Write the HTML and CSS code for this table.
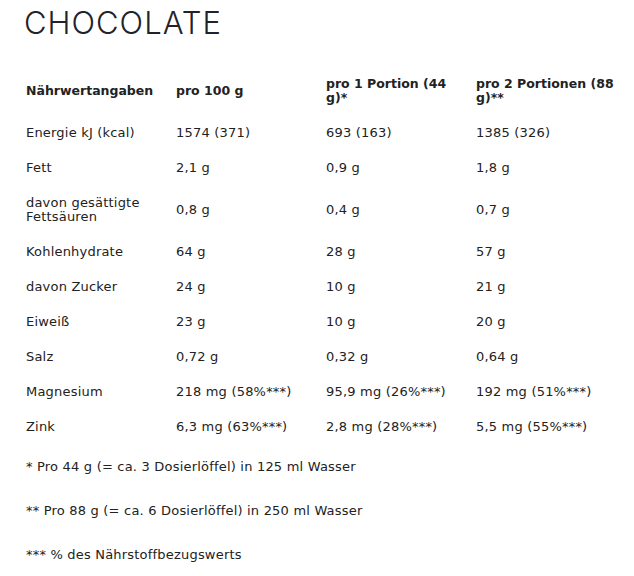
FILE: index.html
```html
<!DOCTYPE html>
<html lang="de">
<head>
<meta charset="utf-8">
<title>Chocolate</title>
<link rel="stylesheet" href="styles.css">
</head>
<body>
<main class="page">
  <h1 class="title">CHOCOLATE</h1>
  <div class="table">
    <div class="row head">
      <div class="cell">Nährwertangaben</div>
      <div class="cell">pro 100 g</div>
      <div class="cell">pro 1 Portion (44 g)*</div>
      <div class="cell">pro 2 Portionen (88 g)**</div>
    </div>
    <div class="row">
      <div class="cell">Energie kJ (kcal)</div>
      <div class="cell">1574 (371)</div>
      <div class="cell">693 (163)</div>
      <div class="cell">1385 (326)</div>
    </div>
    <div class="row">
      <div class="cell">Fett</div>
      <div class="cell">2,1 g</div>
      <div class="cell">0,9 g</div>
      <div class="cell">1,8 g</div>
    </div>
    <div class="row">
      <div class="cell">davon gesättigte Fettsäuren</div>
      <div class="cell">0,8 g</div>
      <div class="cell">0,4 g</div>
      <div class="cell">0,7 g</div>
    </div>
    <div class="row">
      <div class="cell">Kohlenhydrate</div>
      <div class="cell">64 g</div>
      <div class="cell">28 g</div>
      <div class="cell">57 g</div>
    </div>
    <div class="row">
      <div class="cell">davon Zucker</div>
      <div class="cell">24 g</div>
      <div class="cell">10 g</div>
      <div class="cell">21 g</div>
    </div>
    <div class="row">
      <div class="cell">Eiweiß</div>
      <div class="cell">23 g</div>
      <div class="cell">10 g</div>
      <div class="cell">20 g</div>
    </div>
    <div class="row">
      <div class="cell">Salz</div>
      <div class="cell">0,72 g</div>
      <div class="cell">0,32 g</div>
      <div class="cell">0,64 g</div>
    </div>
    <div class="row">
      <div class="cell">Magnesium</div>
      <div class="cell">218 mg (58%***)</div>
      <div class="cell">95,9 mg (26%***)</div>
      <div class="cell">192 mg (51%***)</div>
    </div>
    <div class="row">
      <div class="cell">Zink</div>
      <div class="cell">6,3 mg (63%***)</div>
      <div class="cell">2,8 mg (28%***)</div>
      <div class="cell">5,5 mg (55%***)</div>
    </div>
  </div>
  <div class="notes">
    <p class="note">* Pro 44 g (= ca. 3 Dosierlöffel) in 125 ml Wasser</p>
    <p class="note">** Pro 88 g (= ca. 6 Dosierlöffel) in 250 ml Wasser</p>
    <p class="note">*** % des Nährstoffbezugswerts</p>
  </div>
</main>
</body>
</html>
```

FILE: styles.css
```css
html, body {
  margin: 0;
  padding: 0;
  background: #ffffff;
}

.page {
  padding: 5px 0 0 26px;
  font-family: "DejaVu Sans", "Noto Sans", sans-serif;
  color: #222222;
  font-size: 13px;
  letter-spacing: 0.2px;
}

.title {
  margin: 0 0 0 -2px;
  font-family: Inter, "DejaVu Sans", sans-serif;
  font-size: 31px;
  line-height: 36px;
  font-weight: 300;
  letter-spacing: 1px;
  color: #22222a;
}

.table {
  margin-top: 25px;
  display: flex;
  flex-direction: column;
}

.row {
  display: grid;
  grid-template-columns: 150px 150px 150px 150px;
  align-items: center;
}

.cell {
  padding: 10.5px 14px 10.5px 0;
  line-height: 14px;
}

.cell:last-child {
  padding-right: 0;
}

.head .cell {
  font-weight: bold;
  font-size: 12.5px;
  letter-spacing: 0;
}

.notes {
  margin-top: 16px;
}

.note {
  margin: 0 0 30px 0;
  line-height: 14px;
}
```
